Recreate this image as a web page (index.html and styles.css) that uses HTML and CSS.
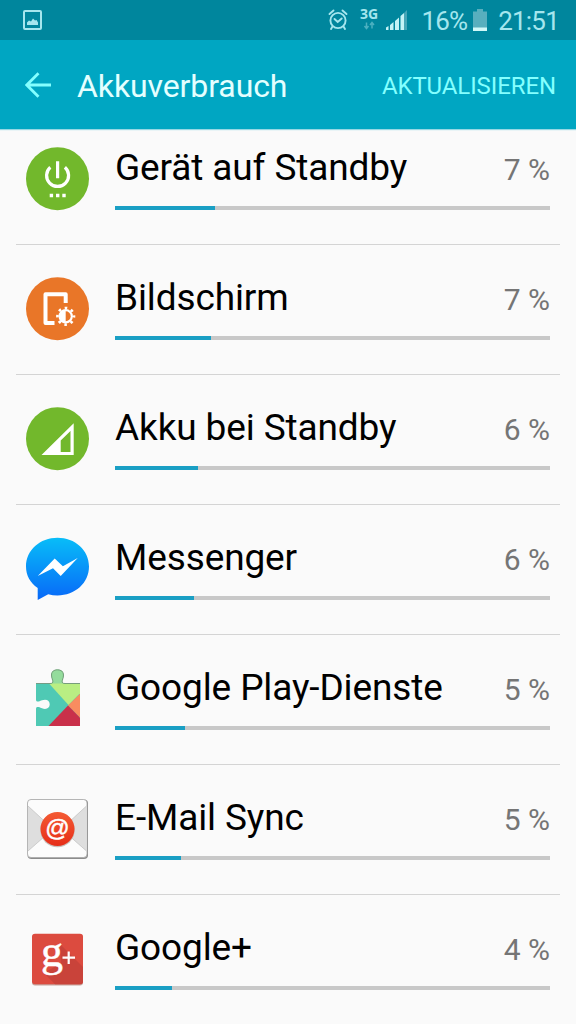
FILE: index.html
```
<!DOCTYPE html>
<html lang="de">
<head>
  <meta charset="UTF-8" />
  <meta name="viewport" content="width=device-width, initial-scale=1.0"/>
  <title>Akkuverbrauch</title>
  <link rel="stylesheet" href="styles.css">
</head>
<body>
  <div class="status-bar">
    <svg class="status-picture" width="20" height="21" viewBox="0 0 20 21">
      <rect x="2" y="1" width="17" height="18" rx="1" fill="none" stroke="#a5e6ee" stroke-width="2"/>
      <path d="M5 15v-2.500l2-2 2 1 2-3 2 2 1.500-.500 1.500 2.500v2.500z" fill="#a5e6ee"/>
    </svg>
    <svg class="status-icons" width="82" height="40" viewBox="0 -8 82 40">
      <g fill="none" stroke="#a5e6ee" stroke-width="1.900" stroke-linecap="round">
        <circle cx="10" cy="12.500" r="7.600"/>
        <path d="M6.500 11l3.200 3 4-3.500M1.500 6l4-3.500M18.500 6l-4-3.500M4.500 18.500l-1.500 2.500M15.500 18.500l1.500 2.500"/>
      </g>
      <text class="net-label" x="32" y="11.300">3G</text>
      <path d="M38.500 14.500v5.500M36.500 18l2 2.500 2-2.500M44 20.500v-5.500M42 17l2-2.500 2 2.500" fill="none" stroke="#4bb0c0" stroke-width="1.500"/>
      <path d="M58 22v-2.500l2.500-1.500v4zM62 22v-5l3.500-3v8zM67 22v-9l4-3.500v12.500zM72.500 22v-14l3.500-3v17z" fill="#c4f3f6"/>
      <path d="M76 22v-17l3-3v20z" fill="#46a6b7"/>
    </svg>
    <span class="status-percent">16%</span>
    <svg class="status-battery" width="14" height="22" viewBox="0 0 14 22">
      <path d="M0 2.500h4v-2.500h6v2.500h4v16.500h-14z" fill="#58afbe"/>
      <rect y="18.500" width="14" height="3.500" fill="#d2f8f8"/>
    </svg>
    <span class="status-time">21:51</span>
  </div>

  <div class="header">
    <svg class="back" width="26" height="26" viewBox="0 0 26 26">
      <path d="M26 13h-24M13.500 1.300L1.800 13l11.700 11.700" fill="none" stroke="#84ffff" stroke-width="2.800"/>
    </svg>
    <h1>Akkuverbrauch</h1>
    <span class="refresh">AKTUALISIEREN</span>
  </div>

  <div class="usage-list">
    <div class="usage-item">
      <svg class="icon" viewBox="0 0 64 64">
        <circle cx="32.500" cy="31.700" r="31.500" fill="#72b82c"/>
        <path d="M25.300 20.200A11 11 0 1 0 39.900 20.200M32.600 14.200v17" fill="none" stroke="#fff" stroke-width="3.200"/>
        <path d="M24.700 46.800h3.400v3.400h-3.400zM31 46.800h3.400v3.400h-3.400zM37.300 46.800h3.400v3.400h-3.400z" fill="#fff"/>
      </svg>
      <div class="details">
        <div class="line"><span class="name">Gerät auf Standby</span><span class="percent">7 %</span></div>
        <div class="bar"><div class="fill" style="width: 100px"></div></div>
      </div>
    </div>

    <div class="usage-item">
      <svg class="icon" viewBox="0 0 64 64">
        <circle cx="32.500" cy="31.700" r="31.500" fill="#e97628"/>
        <path d="M40.700 26v-8.700h-20.200v28.700h9" fill="none" stroke="#fff" stroke-width="4" stroke-linejoin="round"/>
        <circle cx="40.700" cy="39.300" r="8.300" fill="none" stroke="#fff" stroke-width="2.600" stroke-dasharray="2.600 3.920" stroke-dashoffset="1.300"/>
        <circle cx="40.700" cy="39.300" r="7.200" fill="#fff"/>
        <path d="M40.700 34.300a5 5 0 0 1 0 10z" fill="#e97628"/>
      </svg>
      <div class="details">
        <div class="line"><span class="name">Bildschirm</span><span class="percent">7 %</span></div>
        <div class="bar"><div class="fill" style="width: 96px"></div></div>
      </div>
    </div>

    <div class="usage-item">
      <svg class="icon" viewBox="0 0 64 64">
        <circle cx="32.500" cy="31.700" r="31.500" fill="#72b82c"/>
        <path d="M16.500 48L48.700 16.300V48zM35.700 45h9.800V24l-9.800 9.500z" fill="#fff" fill-rule="evenodd"/>
      </svg>
      <div class="details">
        <div class="line"><span class="name">Akku bei Standby</span><span class="percent">6 %</span></div>
        <div class="bar"><div class="fill" style="width: 83px"></div></div>
      </div>
    </div>

    <div class="usage-item">
      <svg class="icon" viewBox="0 0 64 64">
        <defs>
          <linearGradient id="messenger" x1="0" y1="0" x2="0" y2="1">
            <stop offset="0" stop-color="#08bdf8"/>
            <stop offset="1" stop-color="#0868f8"/>
          </linearGradient>
        </defs>
        <path d="M32.500.700C15 .700 1 13 1 29.500c0 9 4.300 16.500 11.700 21.500v12l10.500-5.800c3 .800 6 1.200 9.300 1.200C50 58.400 64 46 64 29.500S50 .700 32.500.700z" fill="url(#messenger)"/>
        <path d="M12.700 39l17-17.500 8.200 7.700 14.800-8.200-17 18-7.700-7.800z" fill="#fff"/>
      </svg>
      <div class="details">
        <div class="line"><span class="name">Messenger</span><span class="percent">6 %</span></div>
        <div class="bar"><div class="fill" style="width: 79px"></div></div>
      </div>
    </div>

    <div class="usage-item">
      <svg class="icon" viewBox="0 0 64 64">
        <defs>
          <clipPath id="puzzle">
            <path d="M11 16.500h14c2.500 0 3.200-1 2.700-3-.700-2-1.200-3.500-1.200-5.500 0-3.500 2.500-5.200 6-5.200s6 1.700 6 5.200c0 2-.500 3.500-1.200 5.500-.500 2 .200 3 2.700 3H55V59H11V42c0-2 1-2.400 3-1.900 2 .900 4 1.900 6 1.900 3 0 4.700-2 4.700-4.700S23 32.700 20 32.700c-2 0-4 .800-6 1.700-2 .500-3 .100-3-1.900z"/>
          </clipPath>
        </defs>
        <g clip-path="url(#puzzle)">
          <rect width="64" height="64" fill="#4fc9b4"/>
          <path d="M24 16.500L43.500 38 64 17V0H24z" fill="#b9ee83"/>
          <path d="M24 0h17v16.500H24z" fill="#94dc9c"/>
          <path d="M43 38.500L64 18v42z" fill="#f98c60"/>
          <path d="M22.500 60L43 38.500 64 60z" fill="#c9304a"/>
          <rect x="9" y="35.300" width="8" height="4" fill="#fafafa"/>
        </g>
        <path d="M11 16.500h14c2.500 0 3.200-1 2.700-3-.700-2-1.200-3.500-1.200-5.500 0-3.500 2.500-5.200 6-5.200s6 1.700 6 5.200c0 2-.500 3.500-1.200 5.500-.500 2 .200 3 2.700 3H55" fill="none" stroke="#688a70" stroke-width=".8"/>
      </svg>
      <div class="details">
        <div class="line"><span class="name">Google Play-Dienste</span><span class="percent">5 %</span></div>
        <div class="bar"><div class="fill" style="width: 70px"></div></div>
      </div>
    </div>

    <div class="usage-item">
      <svg class="icon" viewBox="0 0 64 64">
        <defs>
          <linearGradient id="seal" x1="0" y1="0" x2="0" y2="1">
            <stop offset="0" stop-color="#f45b34"/>
            <stop offset="1" stop-color="#e62d18"/>
          </linearGradient>
        </defs>
        <rect x="2.500" y="2.500" width="60.500" height="59.500" rx="4" fill="#8c8c8c"/>
        <rect x="2.500" y="2.500" width="59.500" height="58" rx="3.500" fill="#fcfcfc" stroke="#aaa" stroke-width=".8"/>
        <path d="M3 9l25 23L3 54zM61.500 9l-25 23 25 22z" fill="#dedede"/>
        <path d="M3 9l25 23L3 54M61.500 9l-25 23 25 22" fill="none" stroke="#c4c4c4" stroke-width=".8"/>
        <circle cx="32.500" cy="33" r="17.300" fill="#c9c0bc"/>
        <circle cx="32.500" cy="32" r="17" fill="url(#seal)"/>
        <text class="at-sign" x="32.500" y="38.500">@</text>
      </svg>
      <div class="details">
        <div class="line"><span class="name">E-Mail Sync</span><span class="percent">5 %</span></div>
        <div class="bar"><div class="fill" style="width: 66px"></div></div>
      </div>
    </div>

    <div class="usage-item">
      <svg class="icon" viewBox="0 0 64 64">
        <rect x="7" y="7.500" width="51" height="51" rx="3" fill="#c5a29c"/>
        <rect x="7" y="6.700" width="51" height="50.500" rx="3" fill="#dc4b3f"/>
        <path d="M35 17l23 23v14.200a3 3 0 0 1-3 3H30L19 46l17-10z" fill="#c9433a"/>
        <text class="g-letter" x="16" y="38.500">g</text>
        <path d="M43.700 24.500v12.500M37.500 30.700h12.500" stroke="#fff" stroke-width="2.200"/>
      </svg>
      <div class="details">
        <div class="line"><span class="name">Google+</span><span class="percent">4 %</span></div>
        <div class="bar"><div class="fill" style="width: 57px"></div></div>
      </div>
    </div>
  </div>
</body>
</html>
```
FILE: styles.css
```
body {
  font-family: Roboto, sans-serif;
  background: #fafafa;
  margin: 0;
  height: 1024px;
  overflow: hidden;
}

.status-bar {
  display: flex;
  align-items: center;
  height: 40px;
  box-sizing: border-box;
  padding: 0 17px 0 22px;
  background: #00869d;
  color: #a5e6ee;
  font-size: 26px;
  letter-spacing: -0.8px;
}

.status-icons {
  margin-left: auto;
}

.net-label {
  font: bold 14px "Open Sans", sans-serif;
  letter-spacing: 0;
  fill: #a5e6ee;
}

.status-percent {
  margin-left: 11px;
  padding-top: 2px;
}

.status-battery {
  margin-left: 6px;
}

.status-time {
  margin-left: 11px;
  padding-top: 2px;
}

.header {
  position: relative; /* keeps the bar above the scrolled list */
  z-index: 2;
  display: flex;
  align-items: center;
  height: 89px;
  box-sizing: border-box;
  padding: 0 20px 0 25px;
  background: #00a6c2;
  box-shadow: 0 1px 1px rgba(0, 166, 194, 0.4);
}

h1 {
  margin: 3px 0 0 26px;
  font-size: 32px;
  font-weight: 400;
  letter-spacing: -0.1px;
  color: #e4ffff;
}

.refresh {
  margin-left: auto;
  margin-top: 2px;
  font-size: 24px;
  letter-spacing: -0.1px;
  color: #84ffff;
}

/* list is scrolled a little under the header */
.usage-list {
  margin: -14px 16px 0;
}

.usage-item {
  display: flex;
  height: 130px;
  box-sizing: border-box;
  padding: 32px 10px 0 9px;
  border-bottom: 1px solid #d4d4d4;
}

.icon {
  flex: none;
  width: 64px;
  height: 64px;
}

.details {
  flex: 1;
  margin-left: 26px;
}

.line {
  display: flex;
  justify-content: space-between;
  align-items: baseline;
  height: 59px;
  line-height: 41px;
}

.name {
  font-size: 37px;
  letter-spacing: -0.12px;
  color: #000;
}

.percent {
  font-size: 30px;
  color: #757575;
}

.bar {
  height: 4px;
  background: #c8c8c8;
}

.fill {
  height: 4px;
  background: #1a9fc4;
}

.at-sign {
  font: 24px "Liberation Sans", sans-serif;
  text-anchor: middle;
  fill: #fff;
  stroke: #fff;
  stroke-width: 0.5px;
}

.g-letter {
  font: 44px "Liberation Serif", serif;
  fill: #fff;
  stroke: #fff;
  stroke-width: 0.5px;
}
```
